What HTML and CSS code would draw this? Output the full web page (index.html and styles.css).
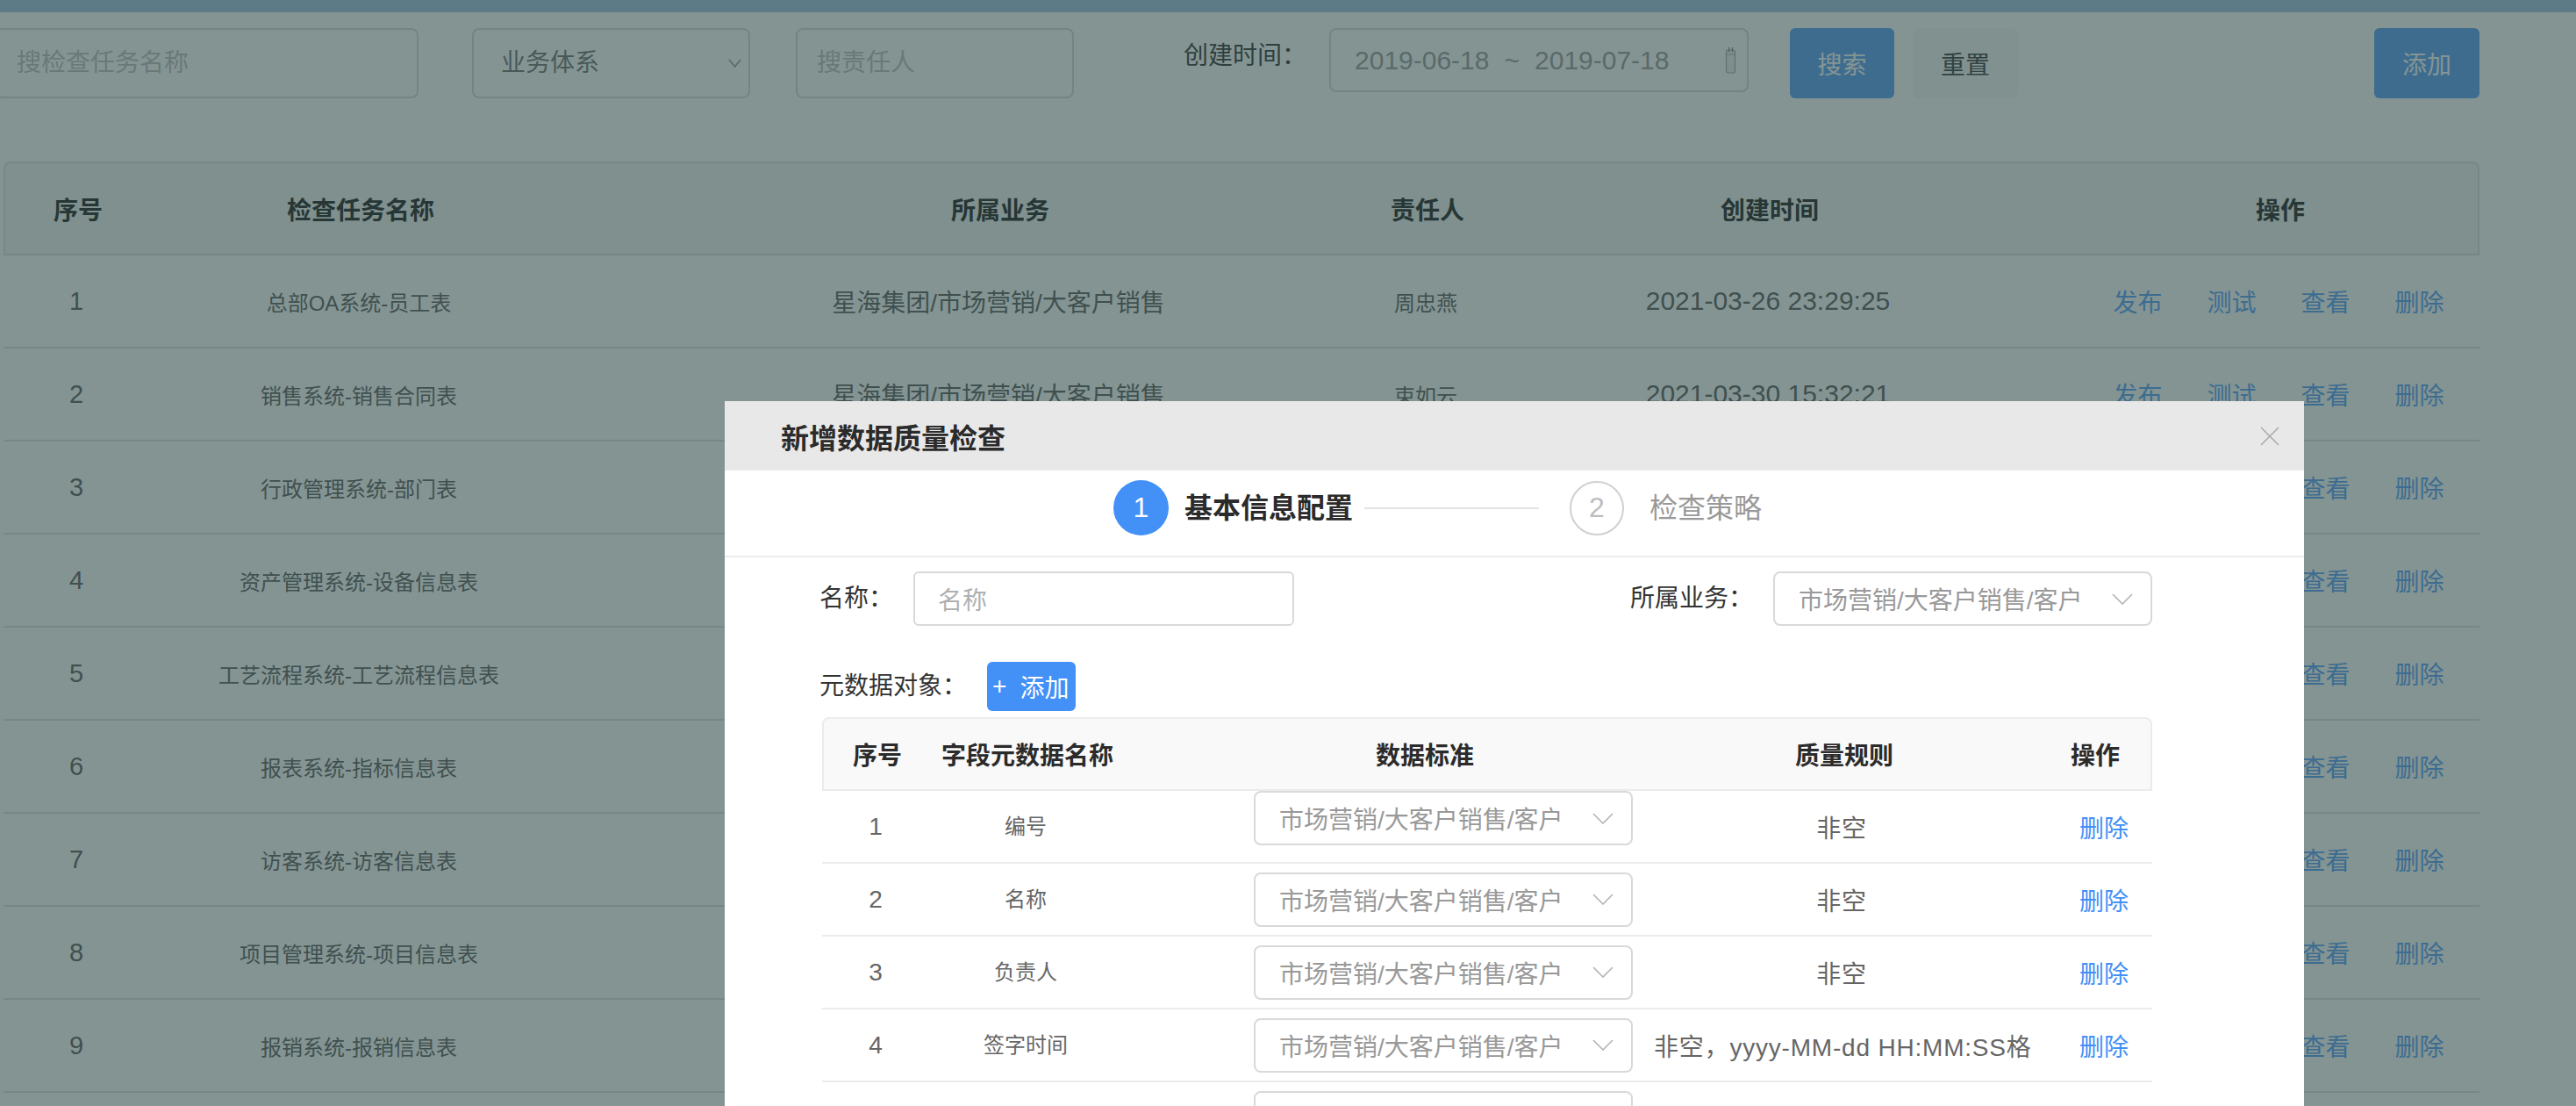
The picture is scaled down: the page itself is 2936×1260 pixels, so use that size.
FILE: index.html
```html
<!DOCTYPE html>
<html lang="zh-CN">
<head>
<meta charset="utf-8">
<title>数据质量检查</title>
<link rel="stylesheet" href="styles.css">
</head>
<body>
<div class="topbar"></div>
<div class="page">
  <div class="search">
    <div class="field field-name"><span class="ph">搜检查任务名称</span></div>
    <div class="field field-select"><span>业务体系</span><svg class="chev-sm" viewBox="0 0 15 10" width="15" height="10"><polyline points="1,1 7.5,9 14,1" fill="none" stroke="#a8a8a8" stroke-width="1.6"/></svg></div>
    <div class="field field-owner"><span class="ph">搜责任人</span></div>
    <span class="search-label">创建时间：</span>
    <div class="daterange"><span>2019-06-18</span><span class="tilde">~</span><span>2019-07-18</span><svg class="cal" viewBox="0 0 13 31" width="13" height="31"><rect x="1.5" y="4" width="10" height="26" rx="2" fill="#f2f2f2" stroke="#b5b5b5" stroke-width="1.2"/><line x1="4.5" y1="1" x2="4.5" y2="6" stroke="#999" stroke-width="1.4"/><line x1="8.5" y1="1" x2="8.5" y2="6" stroke="#999" stroke-width="1.4"/><line x1="1.5" y1="9" x2="11.5" y2="9" stroke="#bbb" stroke-width="1"/></svg></div>
    <button class="btn btn-primary btn-search">搜索</button>
    <button class="btn btn-default btn-reset">重置</button>
    <button class="btn btn-primary btn-add">添加</button>
  </div>

  <div class="table">
    <div class="tr thead">
      <div class="td">序号</div>
      <div class="td">检查任务名称</div>
      <div class="td c3">所属业务</div>
      <div class="td">责任人</div>
      <div class="td">创建时间</div>
      <div class="td c6">操作</div>
    </div>
    <div class="tbody">
      <div class="tr"><div class="td num">1</div><div class="td small">总部OA系统-员工表</div><div class="td c3">星海集团/市场营销/大客户销售</div><div class="td small">周忠燕</div><div class="td date">2021-03-26 23:29:25</div><div class="td c6 actions"><a class="link">发布</a><a class="link">测试</a><a class="link">查看</a><a class="link">删除</a></div></div>
      <div class="tr"><div class="td num">2</div><div class="td small">销售系统-销售合同表</div><div class="td c3">星海集团/市场营销/大客户销售</div><div class="td small">束如云</div><div class="td date">2021-03-30 15:32:21</div><div class="td c6 actions"><a class="link">发布</a><a class="link">测试</a><a class="link">查看</a><a class="link">删除</a></div></div>
      <div class="tr"><div class="td num">3</div><div class="td small">行政管理系统-部门表</div><div class="td c3">星海集团/行政管理/综合办公</div><div class="td small">王志强</div><div class="td date">2021-04-02 10:12:08</div><div class="td c6 actions"><a class="link">发布</a><a class="link">测试</a><a class="link">查看</a><a class="link">删除</a></div></div>
      <div class="tr"><div class="td num">4</div><div class="td small">资产管理系统-设备信息表</div><div class="td c3">星海集团/资产管理/设备管理</div><div class="td small">李春华</div><div class="td date">2021-04-06 09:45:33</div><div class="td c6 actions"><a class="link">发布</a><a class="link">测试</a><a class="link">查看</a><a class="link">删除</a></div></div>
      <div class="tr"><div class="td num">5</div><div class="td small">工艺流程系统-工艺流程信息表</div><div class="td c3">星海集团/生产制造/工艺流程</div><div class="td small">赵明远</div><div class="td date">2021-04-12 14:20:17</div><div class="td c6 actions"><a class="link">发布</a><a class="link">测试</a><a class="link">查看</a><a class="link">删除</a></div></div>
      <div class="tr"><div class="td num">6</div><div class="td small">报表系统-指标信息表</div><div class="td c3">星海集团/经营分析/指标管理</div><div class="td small">陈静怡</div><div class="td date">2021-04-18 16:05:42</div><div class="td c6 actions"><a class="link">发布</a><a class="link">测试</a><a class="link">查看</a><a class="link">删除</a></div></div>
      <div class="tr"><div class="td num">7</div><div class="td small">访客系统-访客信息表</div><div class="td c3">星海集团/行政管理/访客管理</div><div class="td small">孙海涛</div><div class="td date">2021-04-21 11:38:09</div><div class="td c6 actions"><a class="link">发布</a><a class="link">测试</a><a class="link">查看</a><a class="link">删除</a></div></div>
      <div class="tr"><div class="td num">8</div><div class="td small">项目管理系统-项目信息表</div><div class="td c3">星海集团/项目管理/项目运营</div><div class="td small">周忠燕</div><div class="td date">2021-04-25 08:56:30</div><div class="td c6 actions"><a class="link">发布</a><a class="link">测试</a><a class="link">查看</a><a class="link">删除</a></div></div>
      <div class="tr"><div class="td num">9</div><div class="td small">报销系统-报销信息表</div><div class="td c3">星海集团/财务管理/费用报销</div><div class="td small">束如云</div><div class="td date">2021-04-28 17:14:51</div><div class="td c6 actions"><a class="link">发布</a><a class="link">测试</a><a class="link">查看</a><a class="link">删除</a></div></div>
    </div>
  </div>
</div>

<div class="mask"></div>

<div class="modal">
  <div class="modal-header">
    <span class="modal-title">新增数据质量检查</span>
    <svg class="close" viewBox="0 0 22 22" width="22" height="22"><line x1="1" y1="1" x2="21" y2="21" stroke="#aaa" stroke-width="1.6"/><line x1="21" y1="1" x2="1" y2="21" stroke="#aaa" stroke-width="1.6"/></svg>
  </div>
  <div class="steps">
    <div class="step step-active"><span class="step-num">1</span><span class="step-text">基本信息配置</span></div>
    <span class="step-line"></span>
    <div class="step step-wait"><span class="step-num">2</span><span class="step-text">检查策略</span></div>
  </div>
  <div class="modal-body">
    <div class="form-row">
      <div class="form-item"><span class="form-label">名称：</span><div class="input"><span class="ph-m">名称</span></div></div>
      <div class="form-item"><span class="form-label">所属业务：</span><div class="select"><span>市场营销/大客户销售/客户</span><svg class="chev" viewBox="0 0 24 13" width="24" height="13"><polyline points="1,1 12,12 23,1" fill="none" stroke="#b3b3b3" stroke-width="1.6"/></svg></div></div>
    </div>
    <div class="form-row meta-row">
      <span class="form-label">元数据对象：</span>
      <button class="btn-add-sm"><span class="plus">+</span><span>添加</span></button>
    </div>
    <div class="mtable">
      <div class="mtr mthead">
        <div class="mtd">序号</div>
        <div class="mtd">字段元数据名称</div>
        <div class="mtd std-head">数据标准</div>
        <div class="mtd">质量规则</div>
        <div class="mtd">操作</div>
      </div>
      <div class="mtr mrow first">
        <div class="mtd">1</div>
        <div class="mtd fname">编号</div>
        <div class="mtd std"><div class="select"><span>市场营销/大客户销售/客户</span><svg class="chev" viewBox="0 0 24 13" width="24" height="13"><polyline points="1,1 12,12 23,1" fill="none" stroke="#b3b3b3" stroke-width="1.6"/></svg></div></div>
        <div class="mtd rule-cell"><span class="rule">非空</span></div>
        <div class="mtd op"><a class="mlink">删除</a></div>
      </div>
      <div class="mtr mrow">
        <div class="mtd">2</div>
        <div class="mtd fname">名称</div>
        <div class="mtd std"><div class="select"><span>市场营销/大客户销售/客户</span><svg class="chev" viewBox="0 0 24 13" width="24" height="13"><polyline points="1,1 12,12 23,1" fill="none" stroke="#b3b3b3" stroke-width="1.6"/></svg></div></div>
        <div class="mtd rule-cell"><span class="rule">非空</span></div>
        <div class="mtd op"><a class="mlink">删除</a></div>
      </div>
      <div class="mtr mrow">
        <div class="mtd">3</div>
        <div class="mtd fname">负责人</div>
        <div class="mtd std"><div class="select"><span>市场营销/大客户销售/客户</span><svg class="chev" viewBox="0 0 24 13" width="24" height="13"><polyline points="1,1 12,12 23,1" fill="none" stroke="#b3b3b3" stroke-width="1.6"/></svg></div></div>
        <div class="mtd rule-cell"><span class="rule">非空</span></div>
        <div class="mtd op"><a class="mlink">删除</a></div>
      </div>
      <div class="mtr mrow">
        <div class="mtd">4</div>
        <div class="mtd fname">签字时间</div>
        <div class="mtd std"><div class="select"><span>市场营销/大客户销售/客户</span><svg class="chev" viewBox="0 0 24 13" width="24" height="13"><polyline points="1,1 12,12 23,1" fill="none" stroke="#b3b3b3" stroke-width="1.6"/></svg></div></div>
        <div class="mtd rule-cell"><span class="rule">非空，yyyy-MM-dd HH:MM:SS格式</span></div>
        <div class="mtd op"><a class="mlink">删除</a></div>
      </div>
      <div class="mtr mrow">
        <div class="mtd">5</div>
        <div class="mtd fname">状态</div>
        <div class="mtd std"><div class="select"><span>市场营销/大客户销售/客户</span><svg class="chev" viewBox="0 0 24 13" width="24" height="13"><polyline points="1,1 12,12 23,1" fill="none" stroke="#b3b3b3" stroke-width="1.6"/></svg></div></div>
        <div class="mtd rule-cell"><span class="rule">非空</span></div>
        <div class="mtd op"><a class="mlink">删除</a></div>
      </div>
    </div>
  </div>
</div>
</body>
</html>
```

FILE: styles.css
```css
* {
  box-sizing: border-box;
  margin: 0;
  padding: 0;
}

html,
body {
  width: 2936px;
  height: 1260px;
  overflow: hidden;
}

body {
  position: relative;
  background: #fff;
  font-family: "Liberation Sans", "Noto Sans CJK SC", sans-serif;
  color: #333;
}

/* ---------- page behind the mask ---------- */
.topbar {
  height: 14px;
  background: #b1cbe7;
}

.page {
  width: 2826px;
  padding-left: 4px;
}

.search {
  display: flex;
  align-items: flex-start;
  height: 80px;
  margin-top: 18px;
}

.field {
  display: flex;
  align-items: center;
  height: 80px;
  padding-left: 22px;
  border: 2px solid #dedede;
  border-radius: 8px;
  background: #fff;
  font-size: 28px;
  line-height: 32px;
}

.field-name {
  width: 482px;
  margin-left: -9px;
}

.field-select {
  width: 317px;
  margin-left: 61px;
  padding-left: 31px;
  padding-right: 8px;
  justify-content: space-between;
  color: #888;
}

.field-owner {
  width: 317px;
  margin-left: 52px;
}

.ph {
  color: #c8c8c8;
}

.search-label {
  margin-left: 125px;
  margin-top: 16px;
  font-size: 28px;
  line-height: 32px;
  color: #555;
}

.daterange {
  display: flex;
  align-items: center;
  width: 478px;
  height: 73px;
  margin-left: 26px;
  padding-left: 27px;
  padding-right: 12px;
  border: 2px solid #dedede;
  border-radius: 8px;
  font-size: 30px;
  color: #aaa;
}

.tilde {
  margin: 0 17px;
}

.cal {
  margin-left: auto;
}

.btn {
  height: 80px;
  border: none;
  border-radius: 6px;
  font-family: inherit;
  font-size: 28px;
}

.btn-primary {
  width: 119px;
  background: #73aff7;
  color: #fff;
}

.btn-default {
  width: 120px;
  background: #f8f8f8;
  color: #5a5a5a;
}

.btn-search {
  margin-left: 47px;
}

.btn-reset {
  margin-left: 21px;
}

.btn-add {
  width: 120px;
  margin-left: auto;
}

.table {
  margin-top: 72px;
}

.tr {
  display: grid;
  grid-template-columns: 166px 478px 740px 474px 306px 658px;
}

.thead {
  height: 107px;
  background: #f5f7f7;
  border: 2px solid #e3e5e5;
  border-radius: 8px 8px 0 0;
  font-size: 28px;
  font-weight: bold;
  color: #444;
}

.tbody .tr {
  height: 106px;
  border-bottom: 2px solid #e3e5e5;
  font-size: 28px;
  color: #777;
}

.td {
  display: flex;
  align-items: center;
  justify-content: center;
  white-space: nowrap;
}

.c3 {
  padding-left: 240px;
}

.c6 {
  padding-left: 200px;
}

.small {
  font-size: 24px;
}

.num {
  font-size: 29px;
}

.date {
  font-size: 30px;
}

.actions {
  gap: 51px;
}

.link {
  color: #70aff8;
}

/* ---------- mask & modal ---------- */
.mask {
  position: absolute;
  inset: 0;
  z-index: 10;
  background: rgba(9, 41, 39, 0.5);
}

.modal {
  position: absolute;
  left: 826px;
  top: 457px;
  z-index: 11;
  width: 1800px;
  height: 880px;
  background: #fff;
}

.modal-header {
  display: flex;
  align-items: center;
  justify-content: space-between;
  height: 79px;
  padding: 0 28px 0 64px;
  background: #e8e8e8;
}

.modal-title {
  font-size: 32px;
  font-weight: bold;
  color: #2b2b2b;
}

.steps {
  display: flex;
  align-items: center;
  height: 99px;
  padding: 11px 0 23px 443px;
  border-bottom: 2px solid #ececec;
}

.step {
  display: flex;
  align-items: center;
}

.step-num {
  display: flex;
  align-items: center;
  justify-content: center;
  width: 63px;
  height: 63px;
  border-radius: 50%;
  font-size: 32px;
}

.step-text {
  font-size: 32px;
  line-height: 40px;
}

.step-active .step-num {
  background: #4390f7;
  color: #fff;
}

.step-active .step-text {
  margin-left: 18px;
  font-weight: bold;
  color: #2b2b2b;
}

.step-line {
  width: 199px;
  height: 2px;
  margin: 0 35px 0 13px;
  background: #e3e3e3;
}

.step-wait .step-num {
  width: 62px;
  height: 62px;
  border: 2px solid #d0d0d0;
  color: #bdbdbd;
}

.step-wait .step-text {
  margin-left: 29px;
  color: #999;
}

.modal-body {
  padding: 0 173px 0 108px;
}

.form-row {
  display: flex;
  align-items: center;
  justify-content: space-between;
  margin-top: 16px;
}

.form-item {
  display: flex;
  align-items: center;
}

.form-label {
  margin-right: 23px;
  font-size: 28px;
  line-height: 32px;
  color: #333;
}

.input {
  display: flex;
  align-items: center;
  width: 434px;
  height: 62px;
  padding-left: 26px;
  border: 2px solid #d9d9d9;
  border-radius: 6px;
  font-size: 28px;
}

.ph-m {
  color: #b0b0b0;
}

.select {
  display: flex;
  align-items: center;
  justify-content: space-between;
  width: 432px;
  height: 62px;
  padding: 0 20px 0 27px;
  border: 2px solid #d9d9d9;
  border-radius: 8px;
  font-size: 28px;
  color: #999;
  white-space: nowrap;
}

.meta-row {
  justify-content: flex-start;
  margin-top: 41px;
}

.btn-add-sm {
  display: flex;
  align-items: center;
  width: 101px;
  height: 56px;
  padding: 0 6px;
  border: none;
  border-radius: 6px;
  background: #4390f7;
  color: #fff;
  font-family: inherit;
  font-size: 28px;
}

.plus {
  margin-right: 15px;
}

.mtable {
  margin-top: 7px;
  margin-left: 3px;
}

.mtr {
  display: grid;
  grid-template-columns: 122px 220px 602px 438px 134px;
}

.mthead {
  height: 84px;
  background: #f9f9f9;
  border: 2px solid #ebebeb;
  border-radius: 8px 8px 0 0;
  font-size: 28px;
  font-weight: bold;
  color: #2b2b2b;
}

.mrow {
  height: 83px;
  border-bottom: 2px solid #ebebeb;
  font-size: 28px;
  color: #666;
}

.mtd {
  display: flex;
  align-items: center;
  justify-content: center;
  min-width: 0;
  white-space: nowrap;
}

.std-head {
  padding-left: 84px;
}

.fname {
  padding-bottom: 5px;
  font-size: 24px;
}

.std {
  justify-content: flex-end;
  padding-right: 20px;
}

.first .std {
  align-items: flex-start;
}

.rule-cell {
  padding-right: 2px;
}

.rule {
  display: block;
  width: 100%;
  padding: 0 4px;
  overflow: hidden;
  text-align: center;
  letter-spacing: 0.8px;
}

.op {
  padding-left: 24px;
}

.mlink {
  color: #4390f7;
}
```
